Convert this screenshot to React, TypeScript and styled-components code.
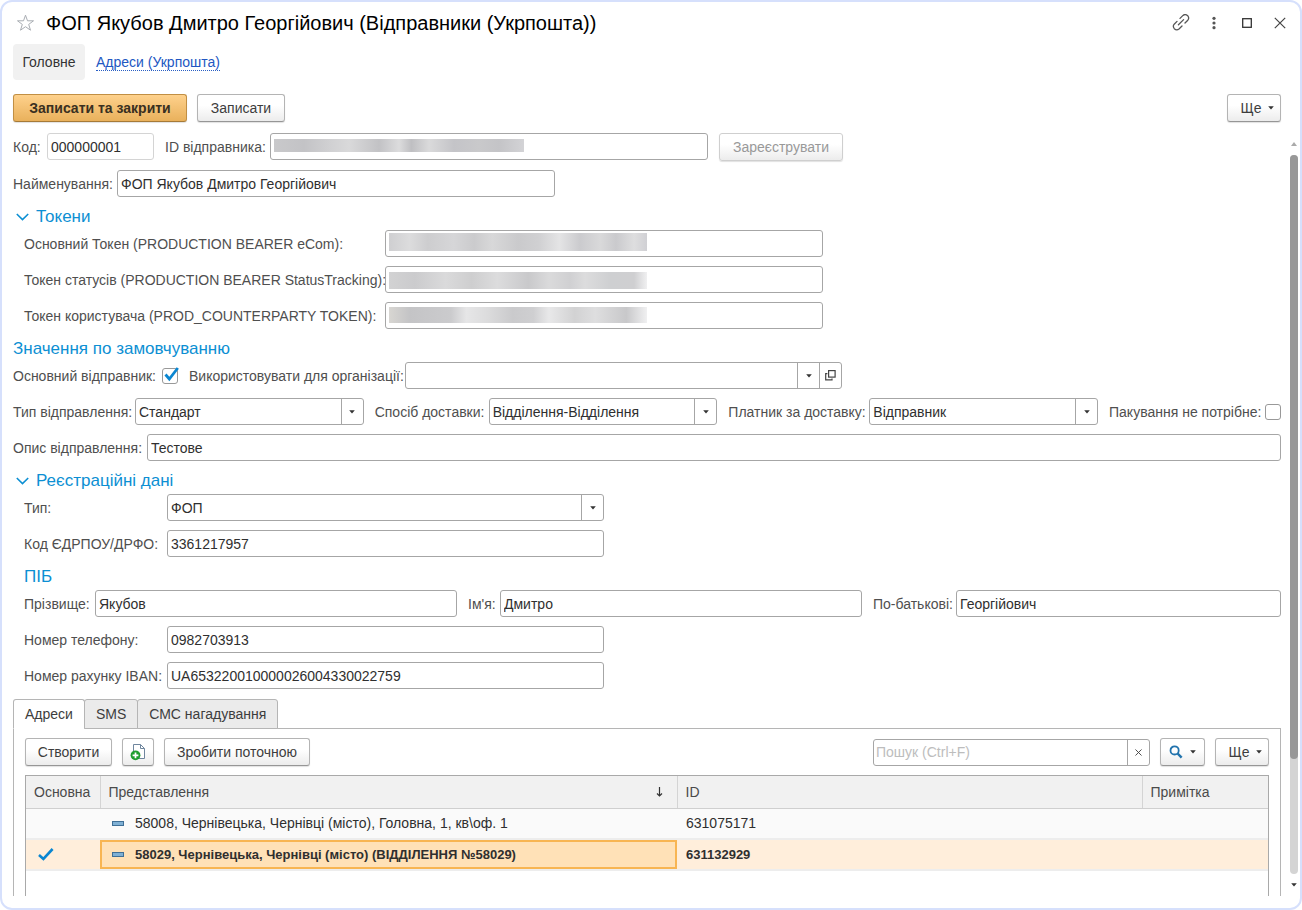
import React, { useId, useState } from 'react';
import styled, { createGlobalStyle, css } from 'styled-components';

const Global = createGlobalStyle`
  *, *::before, *::after { box-sizing: border-box; }
  body { margin: 0; background: #fff; }
  body, button, input, select, table {
    font-family: "Liberation Sans", Arial, sans-serif;
    font-size: 14px;
    line-height: 18px;
  }
  button, input, select { margin: 0; }
`;

const lineColor = '#a6a6a6';
const textColor = '#3a3a3a';
const labelColor = '#4f4f4f';
const accent = '#0c8fd3';

/* ---------- window frame ---------- */

const Window = styled.div`
  display: flex;
  flex-direction: column;
  min-height: 100vh;
  padding: 0 0 12px 11px;
  border: 2px solid #d6e0fc;
  border-radius: 12px;
  background: #fff;
  color: ${textColor};
`;

const TitleBar = styled.header`
  display: flex;
  align-items: center;
  height: 42px;
  padding-right: 8px;
`;

const Title = styled.h1`
  flex: 1;
  margin: 0 0 0 9px;
  color: #000;
  font-size: 20px;
  line-height: 24px;
  font-weight: 400;
  white-space: nowrap;
`;

const IconButton = styled.button`
  display: flex;
  align-items: center;
  justify-content: center;
  width: 24px;
  height: 24px;
  padding: 0;
  border: 0;
  background: none;
  color: #333;
`;

const WindowActions = styled.div`
  display: flex;
  gap: 9px;
`;

const Nav = styled.nav`
  display: flex;
  align-items: center;
  gap: 11px;
  height: 36px;
`;

const NavCurrent = styled.button`
  width: 72px;
  height: 36px;
  padding: 0;
  border: 0;
  border-radius: 4px;
  background: #f1f1f1;
  color: #333;
`;

const NavLink = styled.a`
  padding-top: 2px;
  border-bottom: 1px dotted #2a5fc4;
  color: #2257c2;
  line-height: 15px;
  text-decoration: none;
`;

const CommandBar = styled.div`
  display: flex;
  align-items: center;
  gap: 10px;
  padding: 14px 19px 11px 0;
`;

const Spacer = styled.div`
  flex: 1;
`;

const Button = styled.button<{ $primary?: boolean; $menu?: boolean; $width?: number }>`
  display: flex;
  align-items: center;
  justify-content: center;
  gap: 7px;
  flex: none;
  width: ${(p) => (p.$width ? `${p.$width}px` : 'auto')};
  height: 28px;
  padding: ${(p) => (p.$menu ? '0 0 0 7px' : '0')};
  border: 1px solid #b4b4b4;
  border-bottom-color: #969696;
  border-radius: 3px;
  background: linear-gradient(#fff 40%, #ececec);
  box-shadow: 0 1px 1px rgba(0, 0, 0, 0.12);
  color: #3d3d3d;
  white-space: nowrap;

  &:disabled {
    border-color: #cfcfcf;
    color: #999;
  }

  ${(p) =>
    p.$primary &&
    css`
      border-color: #c18f44;
      border-bottom-color: #a67a37;
      background: linear-gradient(#fed18c, #e9b15c);
      color: #3a3021;
      font-weight: 700;
    `}
`;

/* ---------- scrolled area ---------- */

const Scrolled = styled.div`
  display: flex;
  flex: 1;
  gap: 8px;
  padding-right: 1px;
`;

const Form = styled.main`
  display: flex;
  flex-direction: column;
  flex: 1;
  min-width: 0;
`;

const ScrollBar = styled.div`
  display: flex;
  flex-direction: column;
  align-items: center;
  gap: 9px;
  width: 10px;
  padding: 9px 0;
`;

const ScrollTrack = styled.div`
  flex: 1;
  width: 8px;
  border-radius: 4px;
  background: #d4d4d4;
`;

const ScrollThumb = styled.div`
  height: 84%;
  border-radius: 4px;
  background: #989898;
`;

/* ---------- fields ---------- */

const Rows = styled.div<{ $indent?: boolean; $loose?: boolean }>`
  display: flex;
  flex-direction: column;
  gap: ${(p) => (p.$loose ? '10px' : '9px')};
  padding-left: ${(p) => (p.$indent ? '11px' : '0')};
`;

const Row = styled.div`
  display: flex;
  align-items: center;
  gap: 11px;
  height: 27px;
`;

const FieldBox = styled.div<{ $width?: number; $basis?: number }>`
  display: flex;
  align-items: center;
  min-width: 0;
  flex: ${(p) => (p.$width ? `0 0 ${p.$width}px` : `1 1 ${p.$basis ?? 0}px`)};
`;

const Label = styled.label<{ $width: number }>`
  flex: 0 0 ${(p) => p.$width}px;
  min-width: 0;
  color: ${labelColor};
  white-space: nowrap;
`;

const TextInput = styled.input<{ $muted?: boolean }>`
  flex: 1;
  min-width: 0;
  height: 27px;
  padding: 0 3px;
  border: 1px solid ${(p) => (p.$muted ? '#d4d4d4' : lineColor)};
  border-radius: 3px;
  background: #fff;
  color: #2f2f2f;
`;

const HiddenValue = styled(TextInput)<{ $top: number; $bar: number; $length: number; $tones: string }>`
  background: linear-gradient(90deg, ${(p) => p.$tones}) 3px ${(p) => p.$top}px /
    ${(p) => p.$length}px ${(p) => p.$bar}px no-repeat #fff;
`;

const Combo = styled.div`
  display: grid;
  grid-template-columns: minmax(0, 1fr) 22px;
  flex: 1;
  min-width: 0;
  height: 27px;
  border: 1px solid ${lineColor};
  border-radius: 3px;
`;

const Select = styled.select`
  grid-area: 1 / 1 / 2 / 3;
  min-width: 0;
  padding: 0 26px 0 3px;
  border: 0;
  background: none;
  color: #2f2f2f;
  appearance: none;
`;

const ComboArrow = styled.span`
  display: flex;
  align-items: center;
  justify-content: center;
  grid-area: 1 / 2 / 2 / 3;
  border-left: 1px solid ${lineColor};
  pointer-events: none;
`;

const InputGroup = styled.div`
  display: flex;
  flex: 1;
  min-width: 0;
  height: 27px;
  border: 1px solid ${lineColor};
  border-radius: 3px;
`;

const GroupInput = styled.input`
  flex: 1;
  min-width: 0;
  padding: 0 2px;
  border: 0;
  background: none;
  &::placeholder { color: #bdbdbd; opacity: 1; }
`;

const GroupButton = styled.button`
  display: flex;
  align-items: center;
  justify-content: center;
  flex: 0 0 22px;
  padding: 0;
  border: 0;
  border-left: 1px solid ${lineColor};
  background: none;
`;

const CheckShell = styled.span`
  display: grid;
  flex: none;
  width: 16px;
  height: 16px;
  svg {
    grid-area: 1 / 1;
    overflow: visible;
    pointer-events: none;
  }
`;

const CheckInput = styled.input`
  grid-area: 1 / 1;
  width: 16px;
  height: 16px;
  border: 1px solid #999;
  border-radius: 3px;
  background: #fff;
  appearance: none;
`;

const Heading = styled.h2<{ $indent?: boolean }>`
  display: flex;
  align-items: center;
  gap: 7px;
  height: 20px;
  margin: 10px 0 3px;
  padding-left: ${(p) => (p.$indent ? '11px' : '0')};
  color: ${accent};
  font-size: 17px;
  line-height: 20px;
  font-weight: 400;
`;

const HeadingToggle = styled.button`
  display: flex;
  align-items: center;
  gap: 7px;
  padding: 0 0 0 3px;
  border: 0;
  background: none;
  color: inherit;
  font-size: inherit;
  line-height: inherit;
`;

/* ---------- tabs and table ---------- */

const Tabs = styled.div`
  display: flex;
  height: 30px;
  margin: 10px 0 -1px;
`;

const Tab = styled.button<{ $active?: boolean }>`
  position: relative;
  height: 30px;
  margin-right: -1px;
  padding: 0 11px;
  border: 1px solid #b5b5b5;
  border-bottom-color: ${(p) => (p.$active ? '#fff' : '#b5b5b5')};
  border-radius: 3px 3px 0 0;
  background: ${(p) => (p.$active ? '#fff' : '#ebebeb')};
  color: #3d3d3d;
`;

const Panel = styled.section`
  display: flex;
  flex-direction: column;
  flex: 1;
  padding: 9px 11px 0;
  border: 1px solid #b5b5b5;
  border-bottom: 0;
`;

const Toolbar = styled.div`
  display: flex;
  align-items: center;
  gap: 10px;
  margin-bottom: 9px;
`;

const TableFrame = styled.div`
  flex: 1;
  min-height: 119px;
  border: 1px solid #a9a9a9;
  border-bottom: 0;
`;

const Table = styled.table`
  width: 100%;
  border-collapse: collapse;
  table-layout: fixed;
`;

const HeadCell = styled.th`
  height: 32px;
  padding: 0 8px;
  border-right: 1px solid #d4d4d4;
  border-bottom: 1px solid #cfcfcf;
  background: #f1f1f1;
  color: #4a4a4a;
  font-weight: 400;
  text-align: left;
  white-space: nowrap;
  &:last-child { border-right: 0; }
`;

const HeadLabel = styled.span`
  display: flex;
  align-items: center;
  justify-content: space-between;
  padding-right: 6px;
`;

const BodyRow = styled.tr<{ $selected?: boolean }>`
  background: ${(p) => (p.$selected ? '#ffeedb' : '#fafafa')};
  font-size: ${(p) => (p.$selected ? '13px' : '14px')};
  font-weight: ${(p) => (p.$selected ? 700 : 400)};
`;

const Cell = styled.td<{ $current?: boolean }>`
  height: 31px;
  padding: 0 9px;
  border-bottom: 2px solid #ededed;
  color: #2f2f2f;
  white-space: nowrap;
  ${(p) =>
    p.$current &&
    css`
      background: #ffe1b7;
      box-shadow: inset 0 0 0 2px #f8b552;
    `}
`;

const Entry = styled.span`
  display: flex;
  align-items: center;
  gap: 11px;
  padding-left: 3px;
`;

/* ---------- drawings ---------- */

const Triangle = ({ up, color = '#333' }: { up?: boolean; color?: string }) => (
  <svg width="6" height="4" viewBox="0 0 6 4" aria-hidden="true">
    <path d={up ? 'M0 4L3 0L6 4Z' : 'M0.2 0.3H5.8L3 3.6Z'} fill={color} />
  </svg>
);

const Star = () => (
  <svg width="18" height="18" viewBox="0 0 18 18" fill="none" stroke="#a9adb3" aria-hidden="true">
    <path d="M9.5 1.2L11.5 6.8H17.5L12.7 10.4L14.5 16.2L9.5 12.7L4.5 16.2L6.3 10.4L1.5 6.8H7.5Z" />
  </svg>
);

const LinkIcon = () => (
  <svg width="18" height="18" viewBox="0 0 18 18" fill="none" stroke="#555" strokeWidth="1.3" strokeLinecap="round" aria-hidden="true">
    <path d="M6.4 10.8L11.6 5.6" />
    <path d="M8 4.4L11 1.4Q13.4 -0.4 15.7 1.7Q17.6 4 15.8 6.2L13 9" />
    <path d="M10 12L7 15Q4.6 16.8 2.3 14.7Q0.4 12.4 2.2 10.2L5 7.4" />
  </svg>
);

const Dots = () => (
  <svg width="4" height="14" viewBox="0 0 4 14" fill="#555" aria-hidden="true">
    <circle cx="2" cy="2.3" r="1.6" />
    <circle cx="2" cy="7" r="1.6" />
    <circle cx="2" cy="11.7" r="1.6" />
  </svg>
);

const SquareIcon = () => (
  <svg width="10" height="10" viewBox="0 0 10 10" fill="none" stroke="#333" strokeWidth="1.3" aria-hidden="true">
    <rect x="0.7" y="0.7" width="8.6" height="8.6" />
  </svg>
);

const Cross = ({ size, width }: { size: number; width: number }) => (
  <svg width={size} height={size} viewBox="0 0 12 12" stroke="#444" strokeWidth={width} aria-hidden="true">
    <path d="M0.8 0.8L11.2 11.2M11.2 0.8L0.8 11.2" />
  </svg>
);

const Chevron = () => (
  <svg width="13" height="8" viewBox="0 0 13 8" fill="none" stroke={accent} strokeWidth="1.6" aria-hidden="true">
    <path d="M0.8 1L6.5 6.6L12.2 1" />
  </svg>
);

const Tick = () => (
  <svg width="16" height="16" viewBox="0 0 16 16" fill="none" stroke="#0a86d1" strokeWidth="2.8" aria-hidden="true">
    <path d="M3.5 6.5L7.3 11L15.8 0" />
  </svg>
);

const RowTick = () => (
  <svg width="16" height="14" viewBox="0 0 16 14" fill="none" stroke="#0a86d1" strokeWidth="2.6" aria-hidden="true">
    <path d="M1 7L5.4 11L14.6 1" />
  </svg>
);

const OpenIcon = () => (
  <svg width="11" height="11" viewBox="0 0 11 11" fill="none" stroke="#444" strokeWidth="1.2" aria-hidden="true">
    <rect x="3.6" y="0.6" width="6.5" height="6.5" />
    <path d="M2.4 3.6H0.7V9.9H7V8.4" />
  </svg>
);

const AddPage = () => (
  <svg width="16" height="17" viewBox="0 0 16 17" fill="none" aria-hidden="true">
    <path d="M3.5 0.5H10.5L14.5 4.5V14.5H3.5Z" fill="#fff" stroke="#6f869e" />
    <path d="M10.5 0.5V4.5H14.5" stroke="#6f869e" />
    <circle cx="5.5" cy="11.3" r="4.9" fill="#1f9d2f" />
    <path d="M5.5 8.4V14.2M2.6 11.3H8.4" stroke="#fff" strokeWidth="1.7" />
  </svg>
);

const Magnifier = () => (
  <svg width="14" height="14" viewBox="0 0 14 14" fill="none" stroke="#2173ad" aria-hidden="true">
    <circle cx="5.6" cy="5.4" r="4.1" strokeWidth="1.8" />
    <path d="M8.6 8.5L12.6 12.7" strokeWidth="2.4" />
  </svg>
);

const SortArrow = () => (
  <svg width="7" height="10" viewBox="0 0 7 10" fill="none" stroke="#333" strokeWidth="1.2" aria-hidden="true">
    <path d="M3.5 0V9M1 6.5L3.5 9L6 6.5" />
  </svg>
);

const Dash = () => (
  <svg width="12" height="5" viewBox="0 0 12 5" aria-hidden="true">
    <rect x="0.5" y="0.5" width="11" height="4" fill="#7fb0d4" stroke="#3f6f96" />
  </svg>
);

/* ---------- composed fields ---------- */

type FieldProps = { label: string; labelWidth: number; width?: number };

const TextField = ({ label, labelWidth, width, value, muted }: FieldProps & { value: string; muted?: boolean }) => {
  const id = useId();
  return (
    <FieldBox $width={width}>
      <Label htmlFor={id} $width={labelWidth}>{label}</Label>
      <TextInput id={id} defaultValue={value} $muted={muted} />
    </FieldBox>
  );
};

const SecretField = ({ label, labelWidth, width, top, bar, length, tones }: FieldProps & { top: number; bar: number; length: number; tones: string }) => {
  const id = useId();
  return (
    <FieldBox $width={width}>
      <Label htmlFor={id} $width={labelWidth}>{label}</Label>
      <HiddenValue id={id} $top={top} $bar={bar} $length={length} $tones={tones} />
    </FieldBox>
  );
};

const SelectField = ({ label, labelWidth, width, value }: FieldProps & { value: string }) => {
  const id = useId();
  return (
    <FieldBox $width={width} $basis={labelWidth}>
      <Label htmlFor={id} $width={labelWidth}>{label}</Label>
      <Combo>
        <Select id={id} defaultValue={value}>
          <option>{value}</option>
        </Select>
        <ComboArrow><Triangle /></ComboArrow>
      </Combo>
    </FieldBox>
  );
};

const CheckField = ({ label, labelWidth, initial }: { label: string; labelWidth: number; initial?: boolean }) => {
  const id = useId();
  const [checked, setChecked] = useState(!!initial);
  return (
    <FieldBox $width={labelWidth + 16}>
      <Label htmlFor={id} $width={labelWidth}>{label}</Label>
      <CheckShell>
        <CheckInput id={id} type="checkbox" checked={checked} onChange={(e) => setChecked(e.target.checked)} />
        {checked && <Tick />}
      </CheckShell>
    </FieldBox>
  );
};

const tonesA = '#c9c9cb, #c3c3c6 12%, #d0d0d2 22%, #d9d9da 30%, #c2c2c5 42%, #dcdcdd 50%, #bfbfc2 55%, #dadadb 62%, #c4c4c8 72%, #c9c9cb 82%, #c4c4c7 90%, #d3d3d6';
const tonesB = '#cfcfd1, #dcdcdd 8%, #cdcdcf 15%, #d6d6d8 25%, #cbcbcd 33%, #d8d8d9 40%, #cacacc 50%, #d0d0d2 58%, #e4e4e5 66%, #cbcbce 74%, #d9d9da 82%, #cacacd 88%, #dededf 95%, #d0d0d4';
const tonesC = '#d2d2d3, #cbcbcd 10%, #dadadb 22%, #cececf 32%, #dcdcdd 42%, #c9c9cb 54%, #dadadb 62%, #d0d0d2 70%, #dcdcdd 76%, #cecfd1 86%, #cfcfd1 95%, #f0f0f1';
const tonesD = '#d8d6d2, #c4c4c6 8%, #cbcbcd 24%, #e6e6e7 30%, #dcdcdd 38%, #cacacc 48%, #cfcfd1 56%, #e8e8e9 62%, #d2d2d3 72%, #dededf 80%, #c8c8ca 92%, #f0f0f1';

export default function App() {
  const organisation = useId();
  return (
    <>
      <Global />
      <Window>
        <TitleBar>
          <IconButton aria-label="Вибране"><Star /></IconButton>
          <Title>ФОП Якубов Дмитро Георгійович (Відправники (Укрпошта))</Title>
          <WindowActions>
            <IconButton aria-label="Посилання"><LinkIcon /></IconButton>
            <IconButton aria-label="Меню"><Dots /></IconButton>
            <IconButton aria-label="Розгорнути"><SquareIcon /></IconButton>
            <IconButton aria-label="Закрити"><Cross size={12} width={1.2} /></IconButton>
          </WindowActions>
        </TitleBar>
        <Nav>
          <NavCurrent>Головне</NavCurrent>
          <NavLink href="#addresses">Адреси (Укрпошта)</NavLink>
        </Nav>
        <CommandBar>
          <Button $primary $width={174}>Записати та закрити</Button>
          <Button $width={88}>Записати</Button>
          <Spacer />
          <Button $menu $width={54}>Ще <Triangle /></Button>
        </CommandBar>

        <Scrolled>
          <Form>
            <Rows $loose>
              <Row>
                <TextField label="Код:" labelWidth={34} width={141} value="000000001" muted />
                <SecretField label="ID відправника:" labelWidth={105} width={543} top={5} bar={13} length={250} tones={tonesA} />
                <Button $width={124} disabled>Зареєструвати</Button>
              </Row>
              <Row>
                <TextField label="Найменування:" labelWidth={104} width={542} value="ФОП Якубов Дмитро Георгійович" />
              </Row>
            </Rows>

            <Heading><HeadingToggle><Chevron />Токени</HeadingToggle></Heading>
            <Rows $indent>
              <Row><SecretField label="Основний Токен (PRODUCTION BEARER eCom):" labelWidth={361} width={799} top={2} bar={18} length={258} tones={tonesB} /></Row>
              <Row><SecretField label="Токен статусів (PRODUCTION BEARER StatusTracking):" labelWidth={361} width={799} top={5} bar={17} length={258} tones={tonesC} /></Row>
              <Row><SecretField label="Токен користувача (PROD_COUNTERPARTY TOKEN):" labelWidth={361} width={799} top={4} bar={16} length={258} tones={tonesD} /></Row>
            </Rows>

            <Heading>Значення по замовчуванню</Heading>
            <Rows>
              <Row>
                <CheckField label="Основний відправник:" labelWidth={149} initial />
                <FieldBox $width={653}>
                  <Label htmlFor={organisation} $width={216}>Використовувати для організації:</Label>
                  <InputGroup>
                    <GroupInput id={organisation} />
                    <GroupButton aria-label="Вибрати"><Triangle /></GroupButton>
                    <GroupButton aria-label="Відкрити"><OpenIcon /></GroupButton>
                  </InputGroup>
                </FieldBox>
              </Row>
              <Row>
                <SelectField label="Тип відправлення:" labelWidth={122} value="Стандарт" />
                <SelectField label="Спосіб доставки:" labelWidth={114} value="Відділення-Відділення" />
                <SelectField label="Платник за доставку:" labelWidth={141} value="Відправник" />
                <CheckField label="Пакування не потрібне:" labelWidth={156} />
              </Row>
              <Row><TextField label="Опис відправлення:" labelWidth={134} value="Тестове" /></Row>
            </Rows>

            <Heading><HeadingToggle><Chevron />Реєстраційні дані</HeadingToggle></Heading>
            <Rows $indent>
              <Row><SelectField label="Тип:" labelWidth={143} width={580} value="ФОП" /></Row>
              <Row><TextField label="Код ЄДРПОУ/ДРФО:" labelWidth={143} width={580} value="3361217957" /></Row>
            </Rows>

            <Heading $indent>ПІБ</Heading>
            <Rows $indent>
              <Row>
                <TextField label="Прізвище:" labelWidth={71} width={433} value="Якубов" />
                <TextField label="Ім'я:" labelWidth={32} width={394} value="Дмитро" />
                <TextField label="По-батькові:" labelWidth={83} value="Георгійович" />
              </Row>
              <Row><TextField label="Номер телефону:" labelWidth={143} width={580} value="0982703913" /></Row>
              <Row><TextField label="Номер рахунку IBAN:" labelWidth={143} width={580} value="UA653220010000026004330022759" /></Row>
            </Rows>

            <Tabs role="tablist">
              <Tab role="tab" aria-selected $active>Адреси</Tab>
              <Tab role="tab">SMS</Tab>
              <Tab role="tab">СМС нагадування</Tab>
            </Tabs>
            <Panel>
              <Toolbar>
                <Button $width={87}>Створити</Button>
                <Button $width={32} aria-label="Додати"><AddPage /></Button>
                <Button $width={146}>Зробити поточною</Button>
                <Spacer />
                <FieldBox $width={277}>
                  <InputGroup>
                    <GroupInput placeholder="Пошук (Ctrl+F)" aria-label="Пошук" />
                    <GroupButton aria-label="Очистити"><Cross size={7} width={1.6} /></GroupButton>
                  </InputGroup>
                </FieldBox>
                <Button $width={45} aria-label="Знайти"><Magnifier /><Triangle /></Button>
                <Button $menu $width={54}>Ще <Triangle /></Button>
              </Toolbar>
              <TableFrame>
                <Table>
                  <colgroup>
                    <col width="74" />
                    <col />
                    <col width="465" />
                    <col width="126" />
                  </colgroup>
                  <thead>
                    <tr>
                      <HeadCell>Основна</HeadCell>
                      <HeadCell><HeadLabel>Представлення<SortArrow /></HeadLabel></HeadCell>
                      <HeadCell>ID</HeadCell>
                      <HeadCell>Примітка</HeadCell>
                    </tr>
                  </thead>
                  <tbody>
                    <BodyRow>
                      <Cell />
                      <Cell><Entry><Dash />58008, Чернівецька, Чернівці (місто), Головна, 1, кв\оф. 1</Entry></Cell>
                      <Cell>631075171</Cell>
                      <Cell />
                    </BodyRow>
                    <BodyRow $selected>
                      <Cell><Entry><RowTick /></Entry></Cell>
                      <Cell $current><Entry><Dash />58029, Чернівецька, Чернівці (місто) (ВІДДІЛЕННЯ №58029)</Entry></Cell>
                      <Cell>631132929</Cell>
                      <Cell />
                    </BodyRow>
                  </tbody>
                </Table>
              </TableFrame>
            </Panel>
          </Form>
          <ScrollBar aria-hidden="true">
            <Triangle up color="#aaa" />
            <ScrollTrack><ScrollThumb /></ScrollTrack>
            <Triangle />
          </ScrollBar>
        </Scrolled>
      </Window>
    </>
  );
}
